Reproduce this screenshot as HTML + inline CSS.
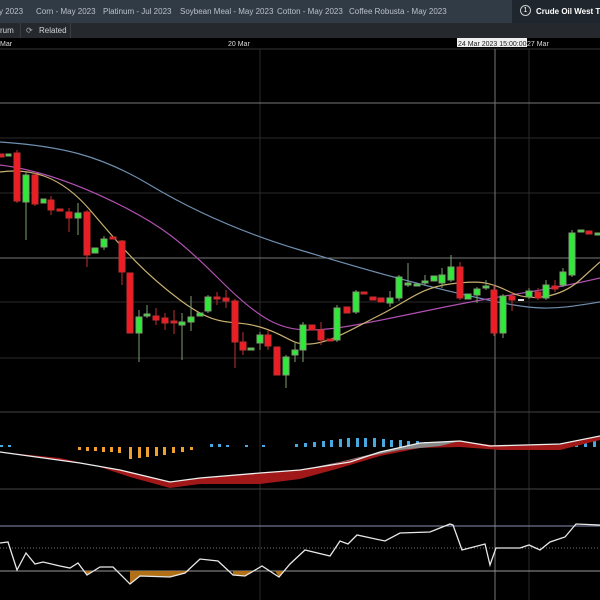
<!DOCTYPE html>
<html><head><meta charset="utf-8"><style>
html,body{margin:0;padding:0;background:#000;width:600px;height:600px;overflow:hidden;font-family:"Liberation Sans",sans-serif}
.tabs{position:absolute;left:0;top:0;width:600px;height:23px;background:#313b46;color:#b9c0c8;font-size:8px;white-space:nowrap}
.tabs span{position:absolute;top:7px}
.act{position:absolute;left:512px;top:0;width:88px;height:23px;background:#20262d;color:#fff;font-weight:bold}
.row2{position:absolute;left:0;top:23px;width:600px;height:15px;background:#25292e;color:#d0d4d8;font-size:8px}
.row2 span{position:absolute;top:3px}
svg{position:absolute;left:0;top:0}
</style></head><body>
<div class="tabs">
<span style="left:-1px">y 2023</span>
<span style="left:36px">Corn - May 2023</span>
<span style="left:103px">Platinum - Jul 2023</span>
<span style="left:180px">Soybean Meal - May 2023</span>
<span style="left:277px">Cotton - May 2023</span>
<span style="left:349px">Coffee Robusta - May 2023</span>
<div class="act"><span style="left:8px;top:5px;display:inline-block;width:9px;height:9px;border:1px solid #ccc;border-radius:50%;font-size:7px;text-align:center;line-height:9px;font-weight:normal">1</span><span style="left:24px">Crude Oil West T</span></div>
</div>
<div class="row2"><span style="left:0">rum</span><span style="left:20px;width:1px;height:15px;top:0;background:#3a3e44"></span><span style="left:26px;top:3px;color:#aaa">&#x27F3;</span><span style="left:39px">Related</span><span style="left:70px;width:1px;height:15px;top:0;background:#3a3e44"></span></div>
<svg width="600" height="600" viewBox="0 0 600 600">
<rect x="0" y="38" width="600" height="562" fill="#000"/>
<g font-size="7" fill="#ddd" font-family="Liberation Sans"><text x="0" y="46">Mar</text><text x="228" y="46">20 Mar</text><rect x="457" y="38" width="70" height="9" fill="#eee"/><text x="458" y="46" fill="#222">24 Mar 2023 15:00:00</text><text x="527" y="46">27 Mar</text></g>
<line x1="0" y1="49" x2="600" y2="49" stroke="#333"/>
<g stroke="#2a2a2a" stroke-width="1">
<line x1="0" y1="138" x2="600" y2="138"/><line x1="0" y1="193" x2="600" y2="193"/><line x1="0" y1="302" x2="600" y2="302"/><line x1="0" y1="358" x2="600" y2="358"/>
<line x1="260" y1="49" x2="260" y2="600"/><line x1="529" y1="49" x2="529" y2="600"/>
</g>
<g stroke="#777"><line x1="0" y1="103" x2="600" y2="103"/><line x1="0" y1="258" x2="600" y2="258"/><line x1="495" y1="49" x2="495" y2="600"/><line x1="0" y1="412" x2="600" y2="412" stroke="#444"/><line x1="0" y1="489" x2="600" y2="489" stroke="#444"/></g>
<g fill="none" stroke-width="1.2">
<path d="M0,142 C60,146 100,155 150,185 S250,235 300,250 S400,280 470,296 S550,310 600,302" stroke="#6f8fb0"/>
<path d="M0,165 C40,170 80,185 120,205 S180,240 220,280 S280,330 310,330 S380,320 450,306 S540,292 600,278" stroke="#b050b0"/>
<path d="M0,172 C30,168 60,175 90,210 S140,270 180,300 S230,318 260,327 S290,345 310,344 S350,330 380,315 S420,288 450,284 S490,282 510,292 S560,298 580,280 S600,262 600,262" stroke="#c8b070"/>
</g>
<g stroke-width="1">
<g fill="#ee1c24" stroke="#c03030">
<line x1="17" y1="150" x2="17" y2="203"/><rect x="14" y="153" width="6" height="48"/>
<line x1="35" y1="172" x2="35" y2="206"/><rect x="32" y="175" width="6" height="29"/>
<line x1="51" y1="196" x2="51" y2="215"/><rect x="48" y="200" width="6" height="10"/>
<rect x="57" y="209" width="6" height="2"/>
<line x1="69" y1="208" x2="69" y2="232"/><rect x="66" y="212" width="6" height="6"/>
<line x1="87" y1="210" x2="87" y2="267"/><rect x="84" y="212" width="6" height="43"/>
<rect x="110" y="237" width="6" height="2"/>
<line x1="122" y1="240" x2="122" y2="285"/><rect x="119" y="241" width="6" height="31"/>
<rect x="127" y="273" width="6" height="60"/>
<line x1="156" y1="308" x2="156" y2="325"/><rect x="153" y="316" width="6" height="4"/>
<line x1="165" y1="313" x2="165" y2="330"/><rect x="162" y="318" width="6" height="5"/>
<line x1="174" y1="310" x2="174" y2="334"/><rect x="171" y="321" width="6" height="2"/>
<line x1="217" y1="292" x2="217" y2="305"/><rect x="214" y="297" width="6" height="2"/>
<line x1="226" y1="290" x2="226" y2="308"/><rect x="223" y="298" width="6" height="3"/>
<line x1="235" y1="299" x2="235" y2="368"/><rect x="232" y="301" width="6" height="41"/>
<line x1="243" y1="332" x2="243" y2="355"/><rect x="240" y="342" width="6" height="8"/>
<line x1="268" y1="330" x2="268" y2="350"/><rect x="265" y="335" width="6" height="11"/>
<rect x="274" y="347" width="6" height="28"/>
<rect x="309" y="325" width="6" height="5"/>
<line x1="321" y1="322" x2="321" y2="345"/><rect x="318" y="330" width="6" height="10"/>
<rect x="327" y="339" width="6" height="2"/>
<rect x="344" y="307" width="6" height="6"/>
<rect x="361" y="292" width="6" height="2"/>
<rect x="370" y="297" width="6" height="3"/>
<rect x="378" y="298" width="6" height="4"/>
<line x1="460" y1="262" x2="460" y2="300"/><rect x="457" y="267" width="6" height="31"/>
<line x1="494" y1="285" x2="494" y2="336"/><rect x="491" y="290" width="6" height="43"/>
<line x1="512" y1="292" x2="512" y2="311"/><rect x="509" y="296" width="6" height="4"/>
<line x1="538" y1="288" x2="538" y2="300"/><rect x="535" y="292" width="6" height="6"/>
<line x1="555" y1="280" x2="555" y2="292"/><rect x="552" y="286" width="6" height="3"/>
<rect x="586" y="231" width="6" height="3"/>
<rect x="0" y="154" width="4" height="3"/>
</g>
<g fill="#2ee83a" stroke="#7fa070">
<rect x="6" y="154" width="5" height="2"/>
<line x1="26" y1="172" x2="26" y2="240"/><rect x="23" y="175" width="6" height="27"/>
<rect x="41" y="199" width="5" height="4"/>
<line x1="78" y1="203" x2="78" y2="235"/><rect x="75" y="213" width="6" height="5"/>
<rect x="92" y="248" width="6" height="5"/>
<line x1="104" y1="236" x2="104" y2="250"/><rect x="101" y="239" width="6" height="8"/>
<line x1="139" y1="310" x2="139" y2="362"/><rect x="136" y="317" width="6" height="16"/>
<line x1="147" y1="305" x2="147" y2="318"/><rect x="144" y="314" width="6" height="2"/>
<line x1="182" y1="313" x2="182" y2="360"/><rect x="179" y="322" width="6" height="3"/>
<line x1="191" y1="296" x2="191" y2="331"/><rect x="188" y="317" width="6" height="5"/>
<rect x="197" y="313" width="6" height="3"/>
<line x1="208" y1="295" x2="208" y2="313"/><rect x="205" y="297" width="6" height="14"/>
<rect x="248" y="348" width="6" height="2"/>
<line x1="260" y1="332" x2="260" y2="350"/><rect x="257" y="335" width="6" height="8"/>
<line x1="286" y1="355" x2="286" y2="388"/><rect x="283" y="357" width="6" height="18"/>
<line x1="295" y1="343" x2="295" y2="362"/><rect x="292" y="350" width="6" height="5"/>
<line x1="303" y1="322" x2="303" y2="362"/><rect x="300" y="325" width="6" height="25"/>
<line x1="337" y1="305" x2="337" y2="342"/><rect x="334" y="308" width="6" height="32"/>
<line x1="356" y1="290" x2="356" y2="314"/><rect x="353" y="292" width="6" height="20"/>
<line x1="390" y1="291" x2="390" y2="307"/><rect x="387" y="298" width="6" height="5"/>
<line x1="399" y1="275" x2="399" y2="301"/><rect x="396" y="277" width="6" height="21"/>
<line x1="408" y1="263" x2="408" y2="287"/><rect x="405" y="283" width="6" height="2"/>
<rect x="414" y="284" width="6" height="2"/>
<line x1="425" y1="275" x2="425" y2="285"/><rect x="422" y="281" width="6" height="2"/>
<rect x="431" y="276" width="6" height="5"/>
<line x1="442" y1="268" x2="442" y2="288"/><rect x="439" y="275" width="6" height="8"/>
<line x1="451" y1="255" x2="451" y2="282"/><rect x="448" y="267" width="6" height="13"/>
<rect x="465" y="294" width="6" height="5"/>
<line x1="477" y1="287" x2="477" y2="303"/><rect x="474" y="289" width="6" height="6"/>
<line x1="486" y1="280" x2="486" y2="290"/><rect x="483" y="286" width="6" height="2"/>
<line x1="503" y1="294" x2="503" y2="338"/><rect x="500" y="296" width="6" height="37"/>
<line x1="529" y1="288" x2="529" y2="299"/><rect x="526" y="291" width="6" height="6"/>
<line x1="546" y1="280" x2="546" y2="300"/><rect x="543" y="285" width="6" height="13"/>
<line x1="563" y1="268" x2="563" y2="287"/><rect x="560" y="272" width="6" height="13"/>
<line x1="572" y1="230" x2="572" y2="277"/><rect x="569" y="233" width="6" height="42"/>
<rect x="578" y="230" width="6" height="2"/>
<rect x="595" y="233" width="5" height="2"/>
</g>
<rect x="518" y="299" width="6" height="2" fill="#ddd"/>
</g>
<g fill="#f0a030">
<rect x="78" y="447" width="3" height="3"/><rect x="86" y="447" width="3" height="4"/><rect x="94" y="447" width="3" height="4"/><rect x="102" y="447" width="3" height="5"/><rect x="110" y="447" width="3" height="5"/><rect x="118" y="447" width="3" height="6"/><rect x="129" y="447" width="3" height="12"/><rect x="138" y="447" width="3" height="11"/><rect x="146" y="447" width="3" height="10"/><rect x="155" y="447" width="3" height="9"/><rect x="163" y="447" width="3" height="8"/><rect x="172" y="447" width="3" height="6"/><rect x="181" y="447" width="3" height="5"/><rect x="190" y="447" width="3" height="3"/>
</g>
<g fill="#4aa8e0">
<rect x="0" y="445" width="3" height="2"/><rect x="8" y="445" width="3" height="2"/><rect x="210" y="444" width="3" height="3"/><rect x="218" y="444" width="3" height="3"/><rect x="226" y="445" width="3" height="2"/><rect x="245" y="445" width="3" height="2"/><rect x="262" y="445" width="3" height="2"/>
<rect x="295" y="444" width="3" height="3"/><rect x="304" y="443" width="3" height="4"/><rect x="313" y="442" width="3" height="5"/><rect x="322" y="441" width="3" height="6"/><rect x="330" y="440" width="3" height="7"/><rect x="339" y="439" width="3" height="8"/><rect x="347" y="438" width="3" height="9"/><rect x="356" y="438" width="3" height="9"/><rect x="364" y="438" width="3" height="9"/><rect x="373" y="438" width="3" height="9"/><rect x="382" y="439" width="3" height="8"/><rect x="390" y="440" width="3" height="7"/><rect x="399" y="440" width="3" height="7"/><rect x="407" y="441" width="3" height="6"/><rect x="416" y="441" width="3" height="6"/><rect x="424" y="442" width="3" height="5"/><rect x="433" y="442" width="3" height="5"/><rect x="441" y="443" width="3" height="4"/><rect x="450" y="443" width="3" height="4"/><rect x="459" y="444" width="3" height="3"/><rect x="468" y="444" width="3" height="3"/><rect x="477" y="444" width="3" height="3"/><rect x="566" y="443" width="3" height="4"/><rect x="575" y="442" width="3" height="5"/><rect x="584" y="441" width="3" height="6"/><rect x="593" y="440" width="3" height="7"/>
</g>
<path d="M0,452 L60,458 L100,467 L130,477 L170,488 L200,484 L260,484 L300,479 L340,468 L380,456 L420,448 L460,447 L500,450 L560,450 L600,440 L600,436 L560,444 L500,446 L460,441 L420,443 L380,452 L340,462 L300,470 L260,473 L200,478 L170,482 L120,470 L80,463 L0,452Z" fill="#a01818"/>
<path d="M300,470 L340,462 L380,452 L420,443 L460,441 L440,446 L400,450 L360,458 L320,467Z" fill="#888"/>
<path d="M0,452 L80,463 L120,470 L170,482 L200,478 L260,473 L300,470 L350,462 L380,452 L420,443 L460,441 L490,446 L560,444 L600,436" fill="none" stroke="#eee" stroke-width="1.3"/>
<line x1="0" y1="526" x2="600" y2="526" stroke="#8890b0"/>
<line x1="0" y1="548" x2="600" y2="548" stroke="#777" stroke-dasharray="1,2"/>
<line x1="0" y1="571" x2="600" y2="571" stroke="#999"/>
<path d="M85,571 L87,575 L92,571Z M130,571 L130,584 L140,576 L170,577 L185,573 L190,571Z M233,571 L233,575 L245,576 L255,571Z M275,571 L279,577 L283,571Z" fill="#b07018"/>
<path d="M0,543 L8,542 L17,570 L26,553 L35,564 L43,562 L60,566 L70,568 L78,563 L87,575 L100,567 L113,567 L130,584 L140,576 L170,577 L185,573 L200,559 L218,561 L233,575 L245,576 L262,566 L279,577 L290,564 L305,550 L330,556 L340,541 L348,544 L357,535 L385,541 L400,533 L430,532 L450,524 L453,525 L462,550 L485,544 L490,565 L496,548 L520,548 L529,545 L540,550 L550,542 L565,537 L576,524 L600,525" fill="none" stroke="#e8e8e8" stroke-width="1.3"/>
</svg>
</body></html>
